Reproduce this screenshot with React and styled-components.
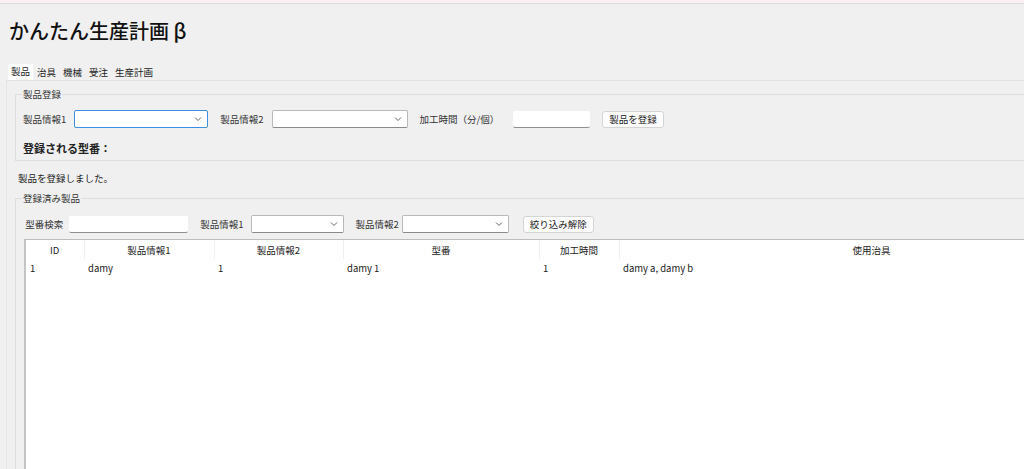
import React from 'react';
import styled, { createGlobalStyle } from 'styled-components';

const Global = createGlobalStyle`
    html, body {
        margin: 0;
        padding: 0;
        background: #f0f0f0;
        overflow: hidden;
    }
    body {
        font-family: "Noto Sans CJK JP", "Noto Sans", sans-serif;
        color: #1a1a1a;
    }
`;

const Window = styled.div`
    display: flex;
    flex-direction: column;
    height: 469px;
    width: 1024px;
    overflow: hidden;
`;

const TopStrip = styled.div`
    height: 3px;
    background: #fbf0f1;
    border-bottom: 1px solid #dcdcdc;
`;

const Title = styled.h1`
    margin: 0;
    padding: 12px 0 0 9px;
    height: 47px;
    box-sizing: border-box;
    font-size: 20px;
    font-weight: 500;
    line-height: 30px;
    color: #111;
`;

const TabBar = styled.div`
    display: flex;
    margin: 13px 0 0 8px;
    height: 16px;
    align-items: flex-end;
`;

const Tab = styled.div`
    font-size: 9.5px;
    line-height: 15px;
    height: ${p => (p.active ? '16px' : '15px')};
    padding: 0 3px;
    margin-right: 1px;
    background: ${p => (p.active ? '#fff' : '#f0f0f0')};
    color: #222;
    box-sizing: border-box;
`;

const Panel = styled.div`
    flex: 1;
    display: flex;
    flex-direction: column;
    margin-left: 6px;
    margin-right: -120px;
    border-left: 1px solid #e6e6e6;
    border-top: 1px solid #e2e2e2;
    padding: 7px 0 0 8px;
`;

const Group = styled.fieldset`
    margin: 0;
    padding: 0 0 0 7px;
    border: 1px solid #dedede;
    border-right: none;
    min-width: 0;
    display: flex;
    flex-direction: column;
    flex: ${p => (p.grow ? 1 : 'none')};
    ${p => p.grow && 'border-bottom: none;'}
`;

const Legend = styled.legend`
    font-size: 9.5px;
    color: #333;
    padding: 0 1px;
    margin-left: -1px;
    line-height: 12px;
`;

const Row = styled.div`
    display: flex;
    align-items: center;
    height: ${p => p.h || 22}px;
    margin-top: ${p => p.mt || 0}px;
`;

const Label = styled.span`
    font-size: 9.5px;
    color: #333;
    margin-right: ${p => p.gap || 8}px;
    white-space: nowrap;
`;

const Select = styled.div`
    position: relative;
    width: ${p => p.w}px;
    height: 18px;
    box-sizing: border-box;
    background: #fff;
    border: 1px solid ${p => (p.focused ? '#3d8ee0' : '#b9b9b9')};
    border-bottom-color: ${p => (p.focused ? '#3d8ee0' : '#8a8a8a')};
    border-radius: 2px;
    margin-right: ${p => p.mr || 12}px;
    svg {
        position: absolute;
        right: 5px;
        top: 5px;
    }
`;

const Input = styled.div`
    width: ${p => p.w}px;
    height: 16px;
    background: #fff;
    border-bottom: 1px solid #8f8f8f;
    border-radius: 2px;
    margin-right: ${p => p.mr || 12}px;
`;

const Button = styled.div`
    height: 17px;
    box-sizing: border-box;
    padding: 0 6px;
    background: #fdfdfd;
    border: 1px solid #d4d4d4;
    border-radius: 3px;
    font-size: 9.5px;
    line-height: 15px;
    color: #222;
`;

const Bold = styled.div`
    font-size: 11px;
    font-weight: 700;
    color: #222;
`;

const Message = styled.div`
    font-size: 9.5px;
    color: #222;
    height: 31px;
    line-height: 34px;
    margin: 0 0 0 3px;
`;

const TableWrap = styled.div`
    flex: 1;
    margin-top: 4px;
    margin-left: 1px;
    background: #fff;
    border-top: 1px solid #bdbdbd;
    border-left: 2px solid #c4c4c4;
`;

const Table = styled.table`
    border-collapse: collapse;
    table-layout: fixed;
    width: 1098px;
    font-size: 9.5px;
    color: #222;
    th {
        font-weight: 400;
        height: 19px;
        padding: 0;
        text-align: center;
        border-right: 1px solid #f0f0f0;
    }
    td {
        height: 18px;
        padding: 0 0 0 4px;
        text-align: left;
    }
`;

const Chevron = () => (
    <svg width="8" height="6" viewBox="0 0 8 6">
        <path d="M1 1.5 L4 4.5 L7 1.5" fill="none" stroke="#666" strokeWidth="1" />
    </svg>
);

const columns = [
    { name: 'ID', w: 58 },
    { name: '製品情報1', w: 130 },
    { name: '製品情報2', w: 129 },
    { name: '型番', w: 196 },
    { name: '加工時間', w: 80 },
    { name: '使用治具', w: 505 },
];

const rows = [['1', 'damy', '1', 'damy 1', '1', 'damy a, damy b']];

export default function App() {
    return (
        <Window>
            <Global />
            <TopStrip />
            <Title>かんたん生産計画 β</Title>
            <TabBar>
                <Tab active>製品</Tab>
                <Tab>治具</Tab>
                <Tab>機械</Tab>
                <Tab>受注</Tab>
                <Tab>生産計画</Tab>
            </TabBar>
            <Panel>
                <Group>
                    <Legend>製品登録</Legend>
                    <Row h={22} mt={8}>
                        <Label>製品情報1</Label>
                        <Select w={134} focused><Chevron /></Select>
                        <Label>製品情報2</Label>
                        <Select w={136}><Chevron /></Select>
                        <Label gap={14}>加工時間（分/個）</Label>
                        <Input w={77} />
                        <Button>製品を登録</Button>
                    </Row>
                    <Row h={24} mt={6}>
                        <Bold>登録される型番：</Bold>
                    </Row>
                </Group>
                <Message>製品を登録しました。</Message>
                <Group grow>
                    <Legend>登録済み製品</Legend>
                    <Row h={22} mt={9}>
                        <Label gap={6}>&nbsp;型番検索</Label>
                        <Input w={119} />
                        <Label>製品情報1</Label>
                        <Select w={93} mr={11}><Chevron /></Select>
                        <Label gap={3}>製品情報2</Label>
                        <Select w={107} mr={14}><Chevron /></Select>
                        <Button>絞り込み解除</Button>
                    </Row>
                    <TableWrap>
                        <Table>
                            <colgroup>
                                {columns.map(c => <col key={c.name} style={{ width: c.w }} />)}
                            </colgroup>
                            <thead>
                                <tr>{columns.map(c => <th key={c.name}>{c.name}</th>)}</tr>
                            </thead>
                            <tbody>
                                {rows.map((r, i) => (
                                    <tr key={i}>{r.map((v, j) => <td key={j}>{v}</td>)}</tr>
                                ))}
                            </tbody>
                        </Table>
                    </TableWrap>
                </Group>
            </Panel>
        </Window>
    );
}
